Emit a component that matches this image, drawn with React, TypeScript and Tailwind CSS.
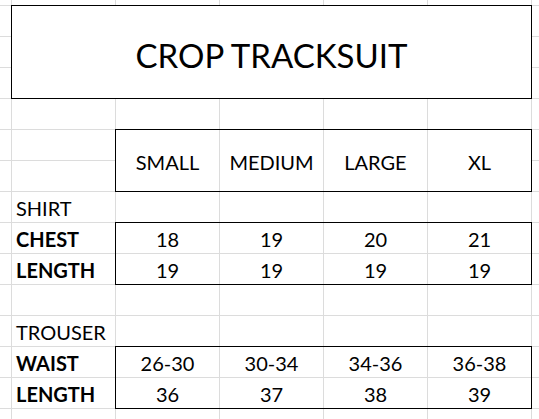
import React from "react";

const font = { fontFamily: "Lato, 'Open Sans', sans-serif" };

function Filler() {
  return <div className="bg-white" />;
}

function LabelCell({ className, children, bold }: { className: string; children: React.ReactNode; bold?: boolean }) {
  return (
    <div className={`${className} bg-white flex items-end pl-[4px] pb-[4px] text-[20px] leading-none text-black ${bold ? "font-bold" : ""}`}>
      {children}
    </div>
  );
}

function ValueCell({ children }: { children: React.ReactNode }) {
  return (
    <div className="bg-white flex items-end justify-center pb-[4px] text-[20px] leading-none text-black">
      {children}
    </div>
  );
}

export default function App() {
  const fillers = Array.from({ length: 60 }, (_, i) => <Filler key={i} />);
  return (
    <div style={font} className="w-[539px] h-[419px] overflow-hidden bg-white">
      <div className="w-[539px] h-[419px] grid grid-cols-[11px_repeat(5,103px)_1fr] grid-rows-[5px_repeat(13,30px)_1fr] gap-px bg-[#dcdcdc]">
        {/* Title */}
        <div className="col-start-2 col-span-5 row-start-2 row-span-3 -m-px border border-black bg-white flex items-center justify-center pt-[6px] text-[33px] leading-none text-black">
          CROP TRACKSUIT
        </div>

        {/* Header box */}
        <div className="col-start-3 col-span-4 row-start-6 row-span-2 -m-px border border-black grid grid-cols-4 gap-px bg-[#dcdcdc]">
          {["SMALL", "MEDIUM", "LARGE", "XL"].map((h) => (
            <div key={h} className="bg-white flex items-center justify-center pt-[3px] text-[20px] leading-none text-black">
              {h}
            </div>
          ))}
        </div>

        <LabelCell className="col-start-2 row-start-8">SHIRT</LabelCell>
        <LabelCell className="col-start-2 row-start-9" bold>CHEST</LabelCell>
        <LabelCell className="col-start-2 row-start-10" bold>LENGTH</LabelCell>

        <div className="col-start-3 col-span-4 row-start-9 row-span-2 -m-px border border-black grid grid-cols-4 grid-rows-2 gap-px bg-[#dcdcdc]">
          {["18", "19", "20", "21", "19", "19", "19", "19"].map((v, i) => (
            <ValueCell key={i}>{v}</ValueCell>
          ))}
        </div>

        <LabelCell className="col-start-2 row-start-12">TROUSER</LabelCell>
        <LabelCell className="col-start-2 row-start-13" bold>WAIST</LabelCell>
        <LabelCell className="col-start-2 row-start-14" bold>LENGTH</LabelCell>

        <div className="col-start-3 col-span-4 row-start-13 row-span-2 -m-px border border-black grid grid-cols-4 grid-rows-2 gap-px bg-[#dcdcdc]">
          {["26-30", "30-34", "34-36", "36-38", "36", "37", "38", "39"].map((v, i) => (
            <ValueCell key={i}>{v}</ValueCell>
          ))}
        </div>

        {fillers}
      </div>
    </div>
  );
}
